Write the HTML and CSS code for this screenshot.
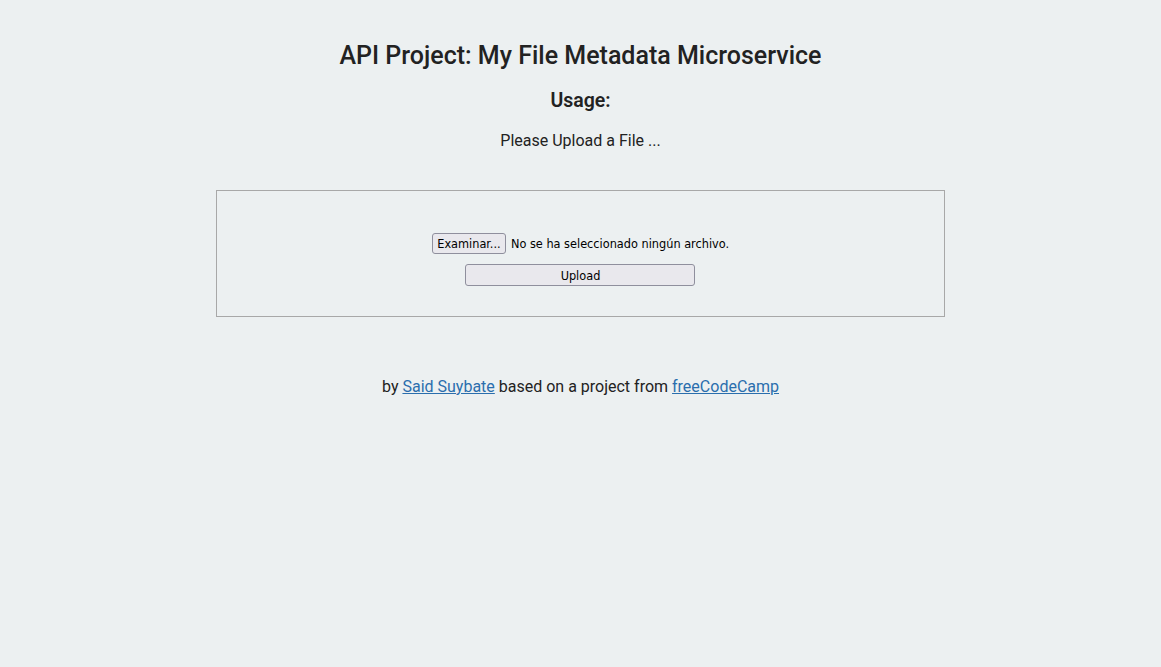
FILE: index.html
```html
<!DOCTYPE html>
<html lang="en">
<head>
<meta charset="utf-8">
<title>File Metadata Microservice</title>
<link rel="stylesheet" href="styles.css">
</head>
<body>
<div class="container">
  <h1 class="title">API Project: My File Metadata Microservice</h1>
  <h3 class="usage">Usage:</h3>
  <p class="intro">Please Upload a File ...</p>
  <div class="view">
    <form class="upload-form">
      <div class="file-row">
        <span class="btn browse">Examinar...</span>
        <span class="file-name">No se ha seleccionado ningún archivo.</span>
      </div>
      <span class="btn submit">Upload</span>
    </form>
  </div>
  <p class="footer">by <a href="#">Said Suybate</a> based on a project from <a href="#">freeCodeCamp</a></p>
</div>
</body>
</html>
```
FILE: styles.css
```css
html, body {
  margin: 0;
  padding: 0;
  background: #ecf0f1;
}
body {
  font-family: Roboto, "Noto Sans", sans-serif;
  color: #222;
  min-height: 667px;
}
.container {
  width: 729px;
  margin: 0 auto;
  display: flex;
  flex-direction: column;
  align-items: center;
  text-align: center;
}
.title {
  font-size: 25px;
  font-weight: 500;
  margin: 41px 0 0;
  line-height: 30px;
}
.usage {
  font-size: 19.5px;
  font-weight: 600;
  margin: 17px 0 0;
  line-height: 26px;
}
.intro {
  font-size: 16px;
  margin: 17px 0 0;
  line-height: 20px;
}
.view {
  align-self: stretch;
  border: 1px solid #a8a8a8;
  margin-top: 39px;
  padding: 42px 0 30px;
  display: flex;
  justify-content: center;
}
.upload-form {
  display: flex;
  flex-direction: column;
  align-items: center;
  gap: 10px;
  font-family: "DejaVu Sans Condensed", "DejaVu Sans", sans-serif;
  font-size: 12.6px;
  color: #000;
}
.file-row {
  display: flex;
  align-items: center;
  gap: 5px;
}
.btn {
  box-sizing: border-box;
  display: inline-flex;
  align-items: center;
  justify-content: center;
  background: #e9e8ed;
  border: 1px solid #8f8f9d;
  border-radius: 3px;
  height: 21px;
}
.browse {
  width: 74px;
}
.submit {
  width: 230px;
  height: 22px;
}
.footer {
  font-size: 16px;
  margin: 60px 0 0;
  line-height: 20px;
}
.footer a {
  color: #2a6ead;
}
```
